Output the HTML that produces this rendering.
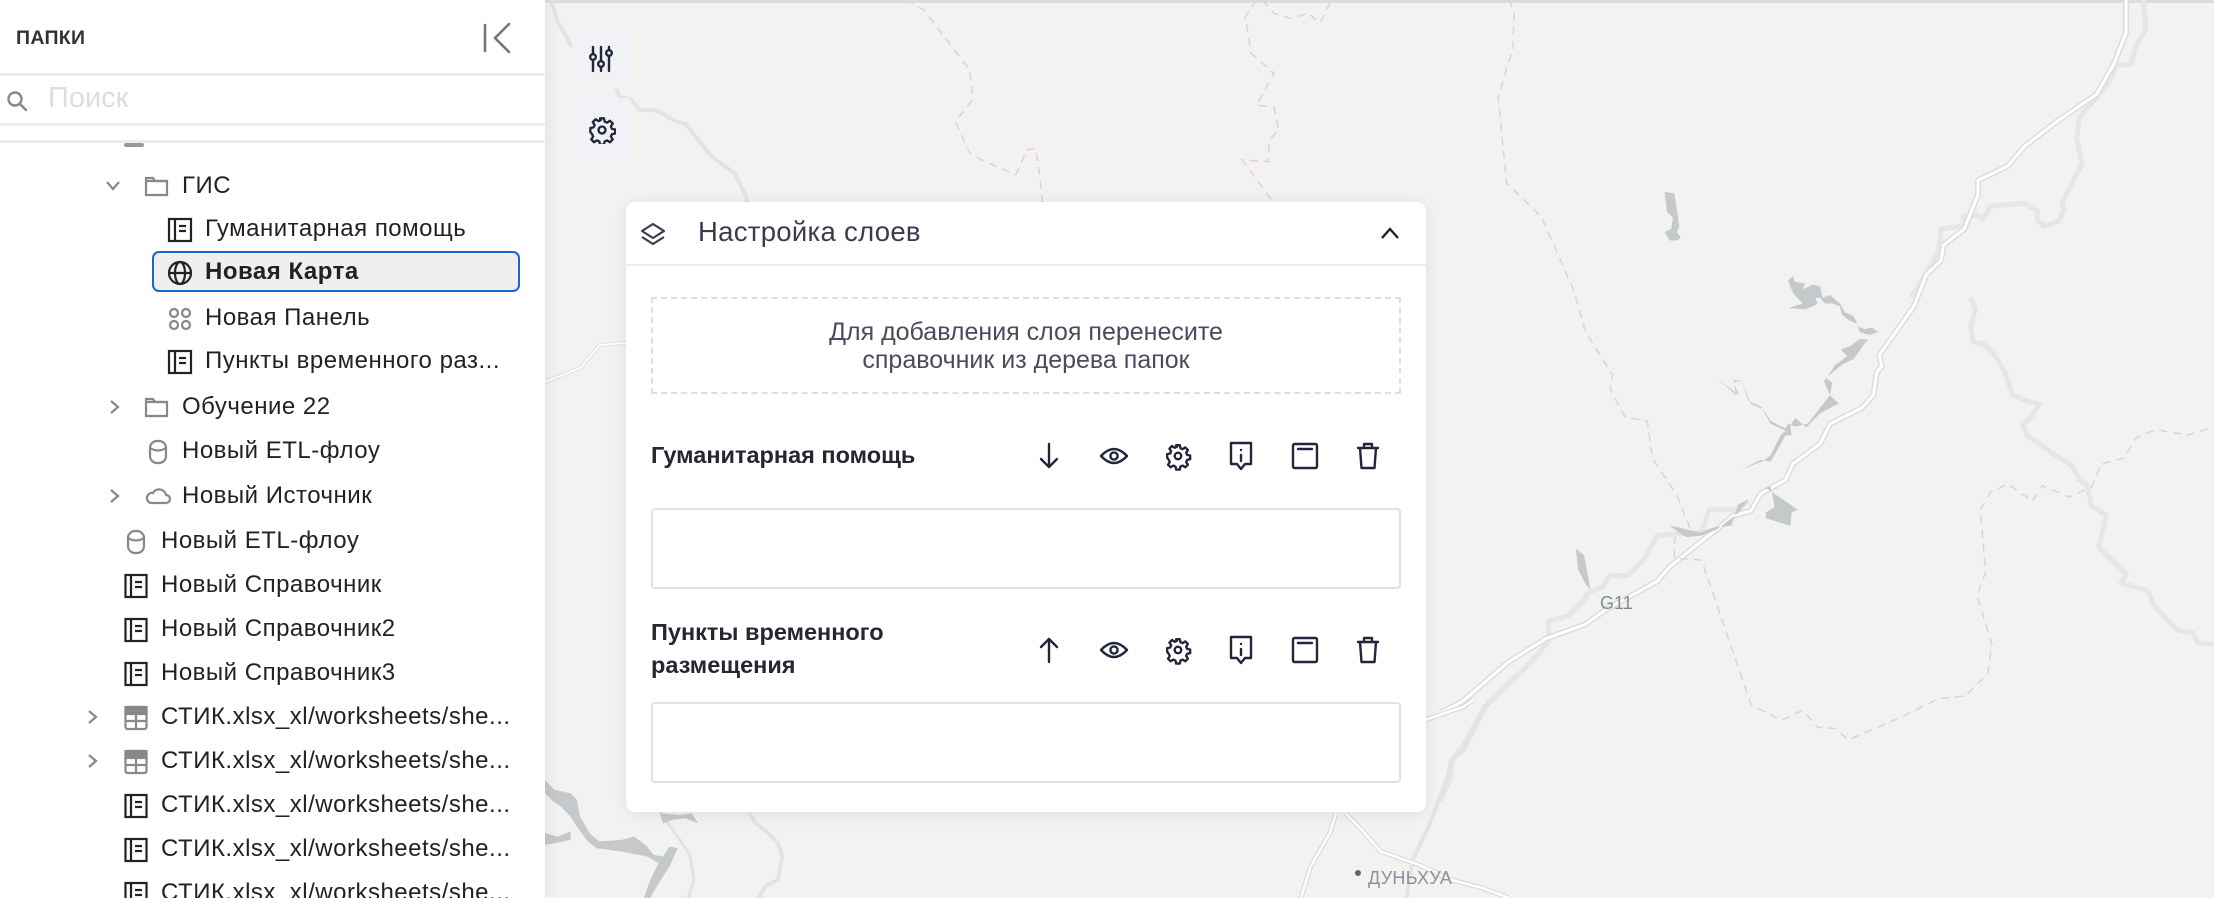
<!DOCTYPE html>
<html><head><meta charset="utf-8">
<style>
*{box-sizing:border-box;margin:0;padding:0}
html,body{width:2214px;height:898px;overflow:hidden;background:#f2f2f1;font-family:"Liberation Sans","Noto Sans CJK SC",sans-serif;color:#1f1f2a}
#map{position:absolute;left:0;top:0;width:2214px;height:898px}
#side{position:absolute;left:0;top:0;width:545px;height:898px;background:#fff;box-shadow:4px 0 14px rgba(0,0,0,0.06);overflow:hidden}
.hline{position:absolute;left:0;width:545px;height:3px;background:#ececec}
.hdr{position:absolute;left:16px;top:27px;font-size:19.5px;font-weight:bold;color:#333;letter-spacing:0.3px}
.row{position:absolute;height:44px;line-height:44px;font-size:24px;color:#222;white-space:nowrap;letter-spacing:0.5px}
.row svg{position:absolute;top:10px}
.chev{position:absolute;top:12px}
.sel{position:absolute;left:152px;top:251px;width:368px;height:41px;border:2px solid #1a66d0;border-radius:7px;background:#efefef}
.btn{position:absolute;left:572px;width:60px;background:#f1f2f6;border-radius:7px}
#panel{position:absolute;left:626px;top:202px;width:800px;height:610px;background:#fff;border-radius:9px;box-shadow:0 2px 16px rgba(0,0,0,0.08)}
.ptitle{position:absolute;left:72px;top:14px;font-size:27.5px;color:#3a3b4c;letter-spacing:0.3px}
.dash{position:absolute;left:25px;top:95px;width:750px;height:97px;border:2px dashed #dedede;text-align:center;font-size:25px;color:#4a4b5c;line-height:28px;padding-top:19px}
.ltitle{position:absolute;left:25px;font-size:23.5px;font-weight:bold;color:#262633;line-height:33px}
.box{position:absolute;left:25px;width:750px;height:81px;border:2px solid #e2e2e2;border-radius:4px}
</style></head><body>
<svg id="map" viewBox="0 0 2214 898">
 <rect width="2214" height="898" fill="#f2f2f1"/>
 <rect width="2214" height="3" fill="#dcdcdc"/>
 <g transform="translate(1440,0) scale(0.4936,0.5727)" fill="none" stroke-linejoin="round">
  <g stroke="#e6e6e4" stroke-width="5">
   <polyline vector-effect="non-scaling-stroke" points="0,1400 20,1360 25,1325 45,1305 90,1235 180,1160 220,1120 220,1085 260,1075 290,1050 300,1035 330,1025 345,1005 380,1005 410,980 440,935 480,932 530,930 545,890 595,890 625,875"/>
   <polyline vector-effect="non-scaling-stroke" points="1075,520 1085,540 1075,570 1080,597 1100,600 1120,615 1145,650 1160,690 1190,700 1215,705 1200,725 1180,742 1190,760 1255,800 1280,812 1295,838 1310,845 1320,883 1350,900 1340,935 1335,955 1345,965 1390,1003 1380,1018 1435,1032 1445,1055 1470,1080 1495,1100 1525,1105 1535,1122 1568,1125"/>
   <polyline vector-effect="non-scaling-stroke" points="955,520 1010,440 1015,400 1060,395 1060,378 1085,375 1100,383 1115,360 1185,355 1210,368 1210,385 1225,395 1255,385 1265,365 1260,355 1300,285 1290,240 1295,205 1355,145 1370,115 1400,112 1410,80 1430,50 1425,0"/>
  </g>
  <polyline vector-effect="non-scaling-stroke" stroke="#dcdcdc" stroke-width="6" points="0,1245 45,1225 140,1155 215,1115 295,1090 335,1065 440,1015 465,990 530,945 560,925 595,900 630,892 650,862 700,838 715,810 770,775 790,740 855,712 878,690 885,650 895,640 890,620 960,535 985,480 1015,455 1020,428 1062,400 1090,340 1090,315 1150,290 1185,255 1250,212 1330,165 1365,112 1390,57 1390,0"/>
  <polyline vector-effect="non-scaling-stroke" stroke="#ffffff" stroke-width="3" points="0,1245 45,1225 140,1155 215,1115 295,1090 335,1065 440,1015 465,990 530,945 560,925 595,900 630,892 650,862 700,838 715,810 770,775 790,740 855,712 878,690 885,650 895,640 890,620 960,535 985,480 1015,455 1020,428 1062,400 1090,340 1090,315 1150,290 1185,255 1250,212 1330,165 1365,112 1390,57 1390,0"/>
  <polyline vector-effect="non-scaling-stroke" stroke="#e8cdd0" stroke-width="1.5" stroke-dasharray="8,6" points="140,0 150,20 148,85 135,120 118,170 135,320 205,378 270,505 295,580 350,655 345,680 375,728 420,735 430,800 480,865 510,930 475,940 475,975 530,978 630,1230 690,1258 735,1240 765,1270 800,1272 828,1292 935,1252 1010,1220 1065,1215 1110,1175 1118,1125 1088,1040 1105,1000 1095,890 1115,860 1150,845 1200,875 1220,848 1275,868 1320,850 1340,810 1385,800 1410,765 1450,750 1515,760 1568,745"/>
  <g fill="#c5c9cc">
   <polygon points="610,820 650,803 670,806 700,760 712,760 710,742 720,730 742,746 770,722 795,710 808,705 790,690 795,668 782,660 815,636 838,627 860,600 868,593 850,592 830,605 812,610 825,622 800,638 785,658 778,665 790,690 770,712 745,740 720,745 705,740 700,748 685,742 670,735 655,715 630,705 610,664 595,664 600,690 560,660 605,690 595,668 610,664 625,700 650,710 670,740 700,752 690,760 670,795 655,805"/>
   <polygon points="660,852 725,890 712,895 710,918 660,905 660,895 678,885 670,850"/>
   <polygon points="705,490 715,482 718,492 740,495 735,505 755,497 770,500 775,520 790,515 810,530 820,545 838,552 848,570 860,575 875,572 888,580 870,585 850,580 845,565 830,560 815,550 810,535 795,530 780,530 770,520 760,520 765,530 755,535 740,540 705,538 735,530 718,515 712,505"/>
   <polygon points="455,335 475,338 485,395 480,405 488,415 480,420 465,420 455,405 468,400 472,380 460,370"/>
   <polygon points="275,958 292,970 305,1030 295,1020 280,995"/>
   <polygon points="465,918 480,920 510,927 530,930 540,925 560,920 590,918 605,880 625,873 605,895 560,925 530,935 500,938 485,930"/>
  </g>
 </g>
 <text x="1600" y="609" font-size="18" fill="#7d8a98" font-family="Liberation Sans">G11</text>
 <g transform="translate(545,0) scale(0.574,0.333)" fill="none">
  <polyline vector-effect="non-scaling-stroke" stroke="#e3e3e1" stroke-width="4" points="10,0 22,65 45,135 90,200 125,270 130,290 150,298 165,330 195,332 225,362 245,372 290,470 330,520 350,590 355,630"/>
  <polyline vector-effect="non-scaling-stroke" stroke="#e8cdd0" stroke-width="1.5" stroke-dasharray="8,6" points="630,0 660,30 740,210 745,300 715,365 740,460 760,480 820,525 840,450 855,445 862,530 868,630"/>
  <polyline vector-effect="non-scaling-stroke" stroke="#e8cdd0" stroke-width="1.5" stroke-dasharray="8,6" points="1240,0 1220,50 1230,160 1270,220 1240,315 1270,322 1278,390 1262,420 1260,485 1215,480 1270,610"/>
  <polyline vector-effect="non-scaling-stroke" stroke="#e8cdd0" stroke-width="1.5" stroke-dasharray="8,6" points="1250,0 1270,40 1300,55 1330,40 1350,70 1370,0"/>
 </g>
 <g fill="none">
  <polyline stroke="#dedede" stroke-width="4" points="545,382 580,368 600,345 626,343"/>
  <polyline stroke="#fff" stroke-width="2" points="545,382 580,368 600,345 626,343"/>
  <polyline stroke="#e3e3e1" stroke-width="3" points="660,812 680,840 690,855 694,880 688,898"/>
 </g>
 <g transform="translate(545,700) scale(0.638,0.333)" fill="none">
  <polyline vector-effect="non-scaling-stroke" stroke="#e3e3e1" stroke-width="4" points="320,340 330,370 350,400 365,430 372,470 365,540 345,560 335,594"/>
  <polyline vector-effect="non-scaling-stroke" stroke="#e3e3e1" stroke-width="4" points="1480,0 1440,150 1420,180 1415,230 1385,380 1360,480 1350,594"/>
  <polyline vector-effect="non-scaling-stroke" stroke="#dcdcdc" stroke-width="5" points="1185,594 1200,500 1230,400 1240,340"/>
  <polyline vector-effect="non-scaling-stroke" stroke="#fff" stroke-width="2.5" points="1185,594 1200,500 1230,400 1240,340"/>
  <polyline vector-effect="non-scaling-stroke" stroke="#dcdcdc" stroke-width="5" points="1255,340 1285,400 1310,455 1370,495 1420,540 1470,565 1510,594"/>
  <polyline vector-effect="non-scaling-stroke" stroke="#fff" stroke-width="2.5" points="1255,340 1285,400 1310,455 1370,495 1420,540 1470,565 1510,594"/>
  <polyline vector-effect="non-scaling-stroke" stroke="#dcdcdc" stroke-width="5" points="1380,60 1440,20 1455,0"/>
  <polyline vector-effect="non-scaling-stroke" stroke="#fff" stroke-width="2.5" points="1380,60 1440,20 1455,0"/>
  <g fill="#c5c9cc">
   <polygon points="0,240 15,270 40,280 50,300 55,350 70,400 85,425 120,420 140,410 160,440 170,465 185,470 195,440 208,445 195,500 175,560 165,594 155,594 165,540 178,490 160,470 120,455 80,445 65,420 50,380 40,350 25,320 10,300 0,280"/>
   <polygon points="180,340 210,345 230,340 240,370 220,355 200,360 185,370"/>
   <polygon points="0,400 20,410 40,395 40,420 15,430 0,435"/>
  </g>
 </g>
 <circle cx="1358" cy="873" r="3" fill="#666"/>
 <text x="1368" y="884" font-size="18" fill="#8693a0" font-family="Liberation Sans" letter-spacing="0.3">ДУНЬХУА</text>
</svg>

<svg width="0" height="0" style="position:absolute">
 <defs>
  <path id="gearp" d="M10.3 2h3.4l.6 2.8 2 .9 2.5-1.6 2.4 2.4-1.6 2.5.9 2 2.8.6v3.4l-2.8.6-.9 2 1.6 2.5-2.4 2.4-2.5-1.6-2 .9-.6 2.8h-3.4l-.6-2.8-2-.9-2.5 1.6-2.4-2.4 1.6-2.5-.9-2L2 13.7v-3.4l2.8-.6.9-2-1.6-2.5 2.4-2.4 2.5 1.6 2-.9z"/>
 </defs>
</svg>

<div class="btn" style="top:27px;height:62px">
 <svg style="position:absolute;left:17px;top:18px" width="26" height="28" viewBox="0 0 26 28" fill="none" stroke="#23263a" stroke-width="2.4" stroke-linecap="round">
  <line x1="4" y1="2" x2="4" y2="9"/><circle cx="4" cy="12" r="2.8"/><line x1="4" y1="15" x2="4" y2="26"/>
  <line x1="12" y1="2" x2="12" y2="16"/><circle cx="12" cy="19" r="2.8"/><line x1="12" y1="22" x2="12" y2="26"/>
  <line x1="20" y1="2" x2="20" y2="4"/><circle cx="20" cy="8" r="2.8"/><line x1="20" y1="11" x2="20" y2="26"/>
 </svg>
</div>
<div class="btn" style="top:98px;height:64px">
 <svg style="position:absolute;left:16px;top:18px" width="28" height="28" viewBox="0 0 24 24" fill="none" stroke="#23263a" stroke-width="2" stroke-linejoin="round"><circle cx="12" cy="12" r="3"/><use href="#gearp"/></svg>
</div>

<div id="side">
 <div class="hdr">ПАПКИ</div>
 <svg style="position:absolute;left:482px;top:22px" width="32" height="32" viewBox="0 0 32 32" fill="none" stroke="#777" stroke-width="2.6" stroke-linecap="round"><line x1="3" y1="3" x2="3" y2="29"/><polyline points="27,2 13,16 27,30"/></svg>
 <div class="hline" style="top:73px"></div>
 <svg style="position:absolute;left:6px;top:90px" width="22" height="22" viewBox="0 0 22 22" fill="none" stroke="#888" stroke-width="2.4" stroke-linecap="round"><circle cx="9" cy="9" r="6.5"/><line x1="14" y1="14" x2="20" y2="20"/></svg>
 <div style="position:absolute;left:48px;top:82px;font-size:29px;color:#dddddd">Поиск</div>
 <div class="hline" style="top:123px"></div>
 <div class="hline" style="top:140px"></div>
 <div style="position:absolute;left:124px;top:143px;width:20px;height:4px;background:#999;border-radius:2px"></div>

 <div class="sel"></div>

 <div class="row" style="left:0;top:164px;width:545px">
  <svg class="chev" style="left:105px;top:15px" width="16" height="14" viewBox="0 0 16 14" fill="none" stroke="#888" stroke-width="2.2"><polyline points="2,3 8,10 14,3"/></svg>
  <svg style="left:144px" width="26" height="24" viewBox="0 0 26 24" fill="none" stroke="#888" stroke-width="2.2"><path d="M2 4 h7 l2 3 h12 v14 h-21 z"/><path d="M2 7 h21"/></svg>
  <span style="position:absolute;left:182px">ГИС</span>
 </div>
 <div class="row" style="left:0;top:207px;width:545px">
  <svg style="left:167px" width="26" height="26" viewBox="0 0 26 26" fill="none" stroke="#222" stroke-width="2.2"><rect x="2" y="2" width="22" height="22"/><line x1="8" y1="2" x2="8" y2="24"/><line x1="12" y1="9" x2="19" y2="9"/><line x1="12" y1="14" x2="19" y2="14"/></svg>
  <span style="position:absolute;left:205px">Гуманитарная помощь</span>
 </div>
 <div class="row" style="left:0;top:250px;width:545px">
  <svg style="left:167px" width="26" height="26" viewBox="0 0 26 26" fill="none" stroke="#222" stroke-width="2.2"><circle cx="13" cy="13" r="11"/><ellipse cx="13" cy="13" rx="5" ry="11"/><line x1="2" y1="13" x2="24" y2="13"/></svg>
  <span style="position:absolute;left:205px;font-weight:bold">Новая Карта</span>
 </div>
 <div class="row" style="left:0;top:296px;width:545px">
  <svg style="left:167px" width="26" height="26" viewBox="0 0 26 26" fill="none" stroke="#888" stroke-width="2.2"><circle cx="7" cy="7" r="4"/><circle cx="19" cy="7" r="4"/><circle cx="7" cy="19" r="4"/><circle cx="19" cy="19" r="4"/></svg>
  <span style="position:absolute;left:205px">Новая Панель</span>
 </div>
 <div class="row" style="left:0;top:339px;width:545px">
  <svg style="left:167px" width="26" height="26" viewBox="0 0 26 26" fill="none" stroke="#222" stroke-width="2.2"><rect x="2" y="2" width="22" height="22"/><line x1="8" y1="2" x2="8" y2="24"/><line x1="12" y1="9" x2="19" y2="9"/><line x1="12" y1="14" x2="19" y2="14"/></svg>
  <span style="position:absolute;left:205px">Пункты временного раз...</span>
 </div>
 <div class="row" style="left:0;top:385px;width:545px">
  <svg class="chev" style="left:108px;top:14px" width="12" height="16" viewBox="0 0 12 16" fill="none" stroke="#888" stroke-width="2.2"><polyline points="3,2 10,8 3,14"/></svg>
  <svg style="left:144px" width="26" height="24" viewBox="0 0 26 24" fill="none" stroke="#888" stroke-width="2.2"><path d="M2 4 h7 l2 3 h12 v14 h-21 z"/><path d="M2 7 h21"/></svg>
  <span style="position:absolute;left:182px">Обучение 22</span>
 </div>
 <div class="row" style="left:0;top:429px;width:545px">
  <svg style="left:148px" width="20" height="26" viewBox="0 0 20 26" fill="none" stroke="#888" stroke-width="2.2"><rect x="2" y="2" width="16" height="22" rx="7"/><path d="M2 9 q8 5 16 0"/></svg>
  <span style="position:absolute;left:182px">Новый ETL-флоу</span>
 </div>
 <div class="row" style="left:0;top:474px;width:545px">
  <svg class="chev" style="left:108px;top:14px" width="12" height="16" viewBox="0 0 12 16" fill="none" stroke="#888" stroke-width="2.2"><polyline points="3,2 10,8 3,14"/></svg>
  <svg style="left:145px;top:12px" width="26" height="20" viewBox="0 0 26 20" fill="none" stroke="#888" stroke-width="2.2"><path d="M6 17 h15 a4 4 0 0 0 0-8 a7 7 0 0 0-13-2 a5 5 0 0 0-2 10z"/></svg>
  <span style="position:absolute;left:182px">Новый Источник</span>
 </div>
 <div class="row" style="left:0;top:519px;width:545px">
  <svg style="left:126px" width="20" height="26" viewBox="0 0 20 26" fill="none" stroke="#888" stroke-width="2.2"><rect x="2" y="2" width="16" height="22" rx="7"/><path d="M2 9 q8 5 16 0"/></svg>
  <span style="position:absolute;left:161px">Новый ETL-флоу</span>
 </div>
 <div class="row" style="left:0;top:563px;width:545px">
  <svg style="left:124px" width="24" height="26" viewBox="0 0 24 26" fill="none" stroke="#222" stroke-width="2.2"><rect x="1.5" y="2" width="21" height="22"/><line x1="7" y1="2" x2="7" y2="24"/><line x1="11" y1="9" x2="18" y2="9"/><line x1="11" y1="14" x2="18" y2="14"/></svg>
  <span style="position:absolute;left:161px">Новый Справочник</span>
 </div>
 <div class="row" style="left:0;top:607px;width:545px">
  <svg style="left:124px" width="24" height="26" viewBox="0 0 24 26" fill="none" stroke="#222" stroke-width="2.2"><rect x="1.5" y="2" width="21" height="22"/><line x1="7" y1="2" x2="7" y2="24"/><line x1="11" y1="9" x2="18" y2="9"/><line x1="11" y1="14" x2="18" y2="14"/></svg>
  <span style="position:absolute;left:161px">Новый Справочник2</span>
 </div>
 <div class="row" style="left:0;top:651px;width:545px">
  <svg style="left:124px" width="24" height="26" viewBox="0 0 24 26" fill="none" stroke="#222" stroke-width="2.2"><rect x="1.5" y="2" width="21" height="22"/><line x1="7" y1="2" x2="7" y2="24"/><line x1="11" y1="9" x2="18" y2="9"/><line x1="11" y1="14" x2="18" y2="14"/></svg>
  <span style="position:absolute;left:161px">Новый Справочник3</span>
 </div>
 <div class="row" style="left:0;top:695px;width:545px">
  <svg class="chev" style="left:86px;top:14px" width="12" height="16" viewBox="0 0 12 16" fill="none" stroke="#888" stroke-width="2.2"><polyline points="3,2 10,8 3,14"/></svg>
  <svg style="left:124px" width="24" height="26" viewBox="0 0 24 26" fill="none" stroke="#888" stroke-width="2.2"><rect x="1.5" y="2" width="21" height="22" rx="2"/><rect x="1.5" y="2" width="21" height="7" fill="#888"/><line x1="1.5" y1="16" x2="22.5" y2="16"/><line x1="12" y1="9" x2="12" y2="24"/></svg>
  <span style="position:absolute;left:161px">СТИК.xlsx_xl/worksheets/she...</span>
 </div>
 <div class="row" style="left:0;top:739px;width:545px">
  <svg class="chev" style="left:86px;top:14px" width="12" height="16" viewBox="0 0 12 16" fill="none" stroke="#888" stroke-width="2.2"><polyline points="3,2 10,8 3,14"/></svg>
  <svg style="left:124px" width="24" height="26" viewBox="0 0 24 26" fill="none" stroke="#888" stroke-width="2.2"><rect x="1.5" y="2" width="21" height="22" rx="2"/><rect x="1.5" y="2" width="21" height="7" fill="#888"/><line x1="1.5" y1="16" x2="22.5" y2="16"/><line x1="12" y1="9" x2="12" y2="24"/></svg>
  <span style="position:absolute;left:161px">СТИК.xlsx_xl/worksheets/she...</span>
 </div>
 <div class="row" style="left:0;top:783px;width:545px">
  <svg style="left:124px" width="24" height="26" viewBox="0 0 24 26" fill="none" stroke="#222" stroke-width="2.2"><rect x="1.5" y="2" width="21" height="22"/><line x1="7" y1="2" x2="7" y2="24"/><line x1="11" y1="9" x2="18" y2="9"/><line x1="11" y1="14" x2="18" y2="14"/></svg>
  <span style="position:absolute;left:161px">СТИК.xlsx_xl/worksheets/she...</span>
 </div>
 <div class="row" style="left:0;top:827px;width:545px">
  <svg style="left:124px" width="24" height="26" viewBox="0 0 24 26" fill="none" stroke="#222" stroke-width="2.2"><rect x="1.5" y="2" width="21" height="22"/><line x1="7" y1="2" x2="7" y2="24"/><line x1="11" y1="9" x2="18" y2="9"/><line x1="11" y1="14" x2="18" y2="14"/></svg>
  <span style="position:absolute;left:161px">СТИК.xlsx_xl/worksheets/she...</span>
 </div>
 <div class="row" style="left:0;top:871px;width:545px">
  <svg style="left:124px" width="24" height="26" viewBox="0 0 24 26" fill="none" stroke="#222" stroke-width="2.2"><rect x="1.5" y="2" width="21" height="22"/><line x1="7" y1="2" x2="7" y2="24"/><line x1="11" y1="9" x2="18" y2="9"/><line x1="11" y1="14" x2="18" y2="14"/></svg>
  <span style="position:absolute;left:161px">СТИК.xlsx_xl/worksheets/she...</span>
 </div>
</div>

<div id="panel">
 <svg style="position:absolute;left:13px;top:19px" width="28" height="28" viewBox="0 0 28 28" fill="none" stroke="#3a3b4c" stroke-width="2.2" stroke-linejoin="round"><polygon points="14,3 25,10 14,17 3,10"/><polyline points="3,16 14,23 25,16"/></svg>
 <div class="ptitle">Настройка слоев</div>
 <svg style="position:absolute;left:754px;top:24px" width="20" height="14" viewBox="0 0 20 14" fill="none" stroke="#222" stroke-width="2.4"><polyline points="2,12 10,3 18,12"/></svg>
 <div style="position:absolute;left:0;top:62px;width:800px;height:2px;background:#ececec"></div>
 <div class="dash">Для добавления слоя перенесите<br>справочник из дерева папок</div>
 <div class="ltitle" style="top:237px">Гуманитарная помощь</div>
 <div class="box" style="top:306px"></div>
 <div class="ltitle" style="top:414px">Пункты временного<br>размещения</div>
 <div class="box" style="top:500px"></div>
</div>

<svg style="position:absolute;left:0;top:0;pointer-events:none" width="2214" height="898" fill="none" stroke="#23263a" stroke-width="2.4" stroke-linecap="round" stroke-linejoin="round">
 <defs>
  <g id="eye"><path d="M-13 0 q13 -14 26 0 q-13 14 -26 0z"/><circle r="3.6"/></g>
  <g id="gear"><g transform="translate(-13,-13) scale(1.08)" stroke-width="2.2"><circle cx="12" cy="12" r="3"/><use href="#gearp"/></g></g>
  <g id="info"><path d="M-10 -13 h20 v21 h-6 l-4 5 l-4 -5 h-6z"/><line x1="0" y1="-6" x2="0" y2="-6"/><line x1="0" y1="-1" x2="0" y2="5"/></g>
  <g id="win"><rect x="-12" y="-12" width="24" height="24" rx="1.5"/><line x1="-7" y1="-7" x2="7" y2="-7"/></g>
  <g id="trash"><path d="M-10 -8 h20"/><path d="M-4 -8 v-4 h8 v4"/><path d="M-8 -8 l1.5 20 h13 l1.5 -20"/></g>
 </defs>
 <g transform="translate(0,456)">
  <path d="M1049 -12 v23 M1041 3 l8 8 l8 -8"/>
  <use href="#eye" x="1114"/>
  <use href="#gear" x="1178"/>
  <use href="#info" x="1241"/>
  <use href="#win" x="1305"/>
  <use href="#trash" x="1368"/>
 </g>
 <g transform="translate(0,650)">
  <path d="M1049 12 v-23 M1041 -3 l8 -8 l8 8"/>
  <use href="#eye" x="1114"/>
  <use href="#gear" x="1178"/>
  <use href="#info" x="1241"/>
  <use href="#win" x="1305"/>
  <use href="#trash" x="1368"/>
 </g>
</svg>
</body></html>
